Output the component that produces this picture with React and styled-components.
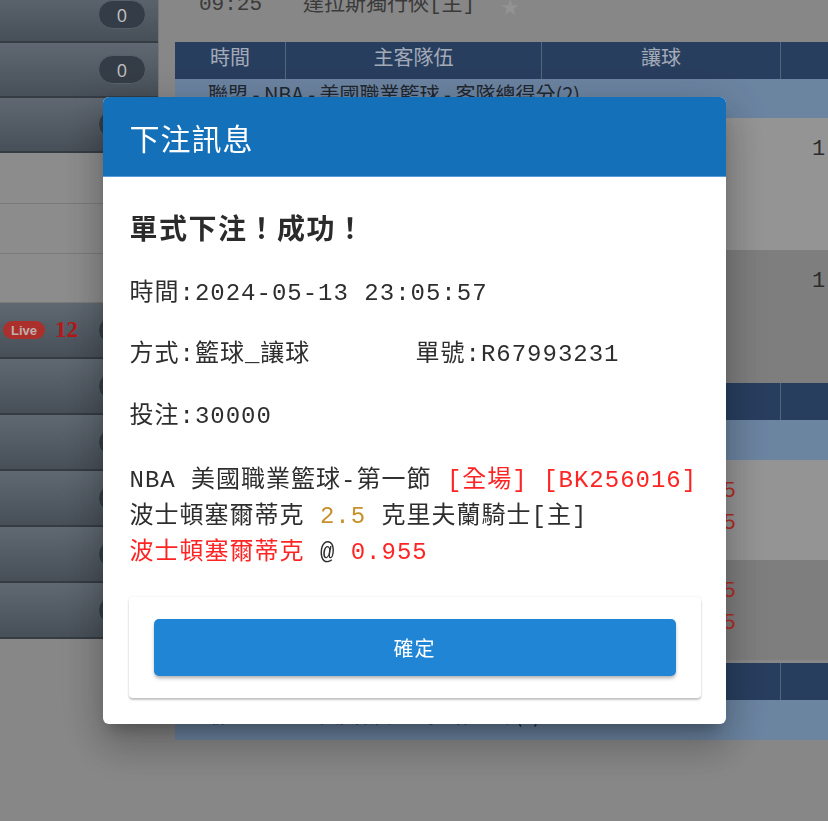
import React from 'react'
import styled, { createGlobalStyle } from 'styled-components'

const GlobalStyle = createGlobalStyle`
  html, body {
    margin: 0;
    padding: 0;
    height: 100%;
    overflow: hidden;
    background: #a9a9a9;
  }
  #root {
    height: 100%;
  }
`

const MONO = `"Liberation Mono", "Noto Sans CJK TC", monospace`
const SANS = `"Noto Sans CJK TC", "Noto Sans", sans-serif`

/* ---------- page behind the dialog ---------- */

const Page = styled.div`
  display: flex;
  height: 100vh;
  background: #a9a9a9;
  overflow: hidden;
`

const Sidebar = styled.div`
  width: 158px;
  flex-shrink: 0;
  display: flex;
  flex-direction: column;
  margin-top: -12px;
  align-self: flex-start;
  border-right: 1px solid #959595;
`

const SideItem = styled.div`
  box-sizing: border-box;
  height: ${({ h }) => h}px;
  display: flex;
  align-items: center;
  padding: 0 12px 0 3px;
  background: ${({ dark }) =>
    dark ? 'linear-gradient(#78838f, #59636e)' : '#b0b0b0'};
  border-bottom: ${({ dark }) =>
    dark ? '2px solid #434b54' : '1px solid #999'};
`

const Pill = styled.span`
  margin-left: auto;
  width: 48px;
  height: 29px;
  border-radius: 15px;
  background: #424c59;
  border: 1px solid #6f7a86;
  box-sizing: border-box;
  display: flex;
  align-items: center;
  justify-content: center;
  color: #f0f0f0;
  font: 18px "Open Sans", sans-serif;
`

const LiveBadge = styled.span`
  width: 42px;
  height: 18px;
  border-radius: 9px;
  background: #d63c36;
  color: #f0dada;
  font: bold 13px "Liberation Sans", sans-serif;
  display: flex;
  align-items: center;
  justify-content: center;
`

const LiveCount = styled.span`
  margin-left: 10px;
  color: #e21e1e;
  font: bold 23px "Liberation Serif", serif;
`

const Main = styled.div`
  flex: 1;
  min-width: 0;
  margin-left: 16px;
  display: flex;
  flex-direction: column;
  overflow: hidden;
`

const TopRow = styled.div`
  height: 42px;
  display: flex;
  align-items: flex-start;
  padding-left: 24px;
  font-family: ${MONO};
  font-size: 21px;
  line-height: 20px;
  color: #494949;
  white-space: nowrap;
  & > span {
    margin-top: -5px;
  }
`

const TopTime = styled.span`
  width: 104px;
`

const Star = styled.span`
  margin-left: 25px;
  color: #b8b8b8;
  font: 22px "DejaVu Sans", sans-serif;
`

const Grid = styled.div`
  display: grid;
  grid-template-columns: 111px 256px 239px minmax(0, 1fr);
`

const HeaderRow = styled(Grid)`
  height: 37px;
  margin-top: ${({ gap }) => gap || 0}px;
  background: #334e77;
`

const HeaderCell = styled.div`
  border-right: 1px solid #6a809b;
  text-align: center;
  line-height: 37px;
  color: #cdd6e4;
  font: 20px ${SANS};
  &:last-child {
    border-right: none;
  }
`

const LeagueRow = styled.div`
  height: ${({ h }) => h}px;
  line-height: ${({ h }) => h}px;
  padding-left: 33px;
  background: #86a5c9;
  color: #26303c;
  font: 20px ${SANS};
  white-space: nowrap;
`

const MatchRow = styled(Grid)`
  box-sizing: border-box;
  height: ${({ h }) => h}px;
  padding-top: 16px;
  background: ${({ dark }) => (dark ? '#9e9e9e' : '#bababa')};
  font-family: ${MONO};
  font-size: 22px;
  line-height: 32px;
`

const OddsCell = styled.div`
  grid-column: 3;
  text-align: right;
  padding-right: 45px;
  color: #dc3a2a;
`

const LastCell = styled.div`
  grid-column: 4;
  padding-left: 31px;
  color: #373737;
  white-space: nowrap;
`

/* ---------- dialog ---------- */

const Backdrop = styled.div`
  position: fixed;
  inset: 0;
  display: flex;
  align-items: center;
  justify-content: center;
  background: rgba(0, 0, 0, 0.2);
`

const Dialog = styled.div`
  width: 623px;
  border-radius: 6px;
  overflow: hidden;
  background: #fff;
  box-shadow: 0 11px 15px -7px rgba(0, 0, 0, 0.25),
    0 24px 38px 3px rgba(0, 0, 0, 0.16), 0 9px 46px 8px rgba(0, 0, 0, 0.12);
`

const DialogTitle = styled.div`
  box-sizing: border-box;
  height: 80px;
  display: flex;
  align-items: center;
  padding: 0 27px;
  background: #1570ba;
  border-bottom: 1px solid #5b9bd5;
  color: #fff;
  font: 30px ${SANS};
  letter-spacing: 1px;
`

const DialogBody = styled.div`
  padding: 30px 25px 26px 26px;
  display: flex;
  flex-direction: column;
`

const Heading = styled.div`
  padding-left: 1px;
  font: bold 28px ${SANS};
  letter-spacing: 1.5px;
  line-height: 40px;
  color: #2b2b2b;
`

const Info = styled.div`
  margin-top: ${({ mt }) => mt}px;
  padding-left: 1px;
  display: flex;
  font-family: ${MONO};
  font-size: 24px;
  letter-spacing: 1px;
  line-height: 36px;
  color: #2e2e2e;
  white-space: nowrap;
`

const InfoCol = styled.span`
  width: 286px;
`

const Detail = styled.div`
  margin-top: 28px;
  padding-left: 1px;
  font-family: ${MONO};
  font-size: 24px;
  letter-spacing: 1px;
  line-height: 36px;
  color: #2e2e2e;
  white-space: nowrap;
`

const Tone = styled.span`
  color: ${({ tone }) =>
    tone === 'red' ? '#ff2424' : tone === 'gold' ? '#c8902a' : '#2e2e2e'};
`

const ActionCard = styled.div`
  margin-top: 26px;
  padding: 22px 25px;
  background: #fff;
  border-radius: 4px;
  box-shadow: 0 2px 2px rgba(0, 0, 0, 0.22), 0 0 3px rgba(0, 0, 0, 0.08);
`

const ConfirmButton = styled.button`
  display: block;
  width: 100%;
  height: 57px;
  border: none;
  border-radius: 5px;
  background: #2185d5;
  color: #fff;
  font: 400 20px ${SANS};
  letter-spacing: 1px;
  cursor: pointer;
  box-shadow: 0 3px 4px -1px rgba(0, 0, 0, 0.25), 0 2px 3px rgba(0, 0, 0, 0.1);
`

const sideItems = [
  { h: 55, dark: true, pill: '0' },
  { h: 55, dark: true, pill: '0' },
  { h: 55, dark: true, pill: '0' },
  { h: 51 },
  { h: 50 },
  { h: 49 },
  { h: 56, dark: true, pill: '0', live: 12 },
  { h: 56, dark: true, pill: '0' },
  { h: 56, dark: true, pill: '0' },
  { h: 56, dark: true, pill: '0' },
  { h: 56, dark: true, pill: '0' },
  { h: 56, dark: true, pill: '0' },
]

const Header = ({ gap }) => (
  <HeaderRow gap={gap}>
    <HeaderCell>時間</HeaderCell>
    <HeaderCell>主客隊伍</HeaderCell>
    <HeaderCell>讓球</HeaderCell>
    <HeaderCell />
  </HeaderRow>
)

const App = () => {
  return (
    <>
      <GlobalStyle />
      <Page>
        <Sidebar>
          {sideItems.map((item, index) => (
            <SideItem key={index} h={item.h} dark={item.dark}>
              {item.live && (
                <>
                  <LiveBadge>Live</LiveBadge>
                  <LiveCount>{item.live}</LiveCount>
                </>
              )}
              {item.pill && <Pill>{item.pill}</Pill>}
            </SideItem>
          ))}
        </Sidebar>
        <Main>
          <TopRow>
            <TopTime>09:25</TopTime>
            <span>達拉斯獨行俠[主]</span>
            <Star>★</Star>
          </TopRow>

          <Header />
          <LeagueRow h={39}>聯盟 - NBA - 美國職業籃球 - 客隊總得分(2)</LeagueRow>
          <MatchRow h={132}>
            <LastCell>1.91</LastCell>
          </MatchRow>
          <MatchRow h={133} dark>
            <LastCell>1.91</LastCell>
          </MatchRow>

          <Header />
          <LeagueRow h={40}>聯盟 - NBA - 美國職業籃球 - 第一節</LeagueRow>
          <MatchRow h={100}>
            <OddsCell>
              2.5
              <br />
              0.955
            </OddsCell>
          </MatchRow>
          <MatchRow h={100} dark>
            <OddsCell>
              3.5
              <br />
              0.865
            </OddsCell>
          </MatchRow>

          <Header gap={3} />
          <LeagueRow h={40}>聯盟 - NBA - 美國職業籃球 - 第二節(2)</LeagueRow>
        </Main>
      </Page>

      <Backdrop>
        <Dialog>
          <DialogTitle>下注訊息</DialogTitle>
          <DialogBody>
            <Heading>單式下注！成功！</Heading>
            <Info mt={29}>時間:2024-05-13 23:05:57</Info>
            <Info mt={25}>
              <InfoCol>方式:籃球_讓球</InfoCol>
              <span>單號:R67993231</span>
            </Info>
            <Info mt={26}>投注:30000</Info>
            <Detail>
              NBA 美國職業籃球-第一節 <Tone tone="red">[全場] [BK256016]</Tone>
              <br />
              波士頓塞爾蒂克 <Tone tone="gold">2.5</Tone> 克里夫蘭騎士[主]
              <br />
              <Tone tone="red">波士頓塞爾蒂克</Tone> @ <Tone tone="red">0.955</Tone>
            </Detail>
            <ActionCard>
              <ConfirmButton>確定</ConfirmButton>
            </ActionCard>
          </DialogBody>
        </Dialog>
      </Backdrop>
    </>
  )
}

export default App
